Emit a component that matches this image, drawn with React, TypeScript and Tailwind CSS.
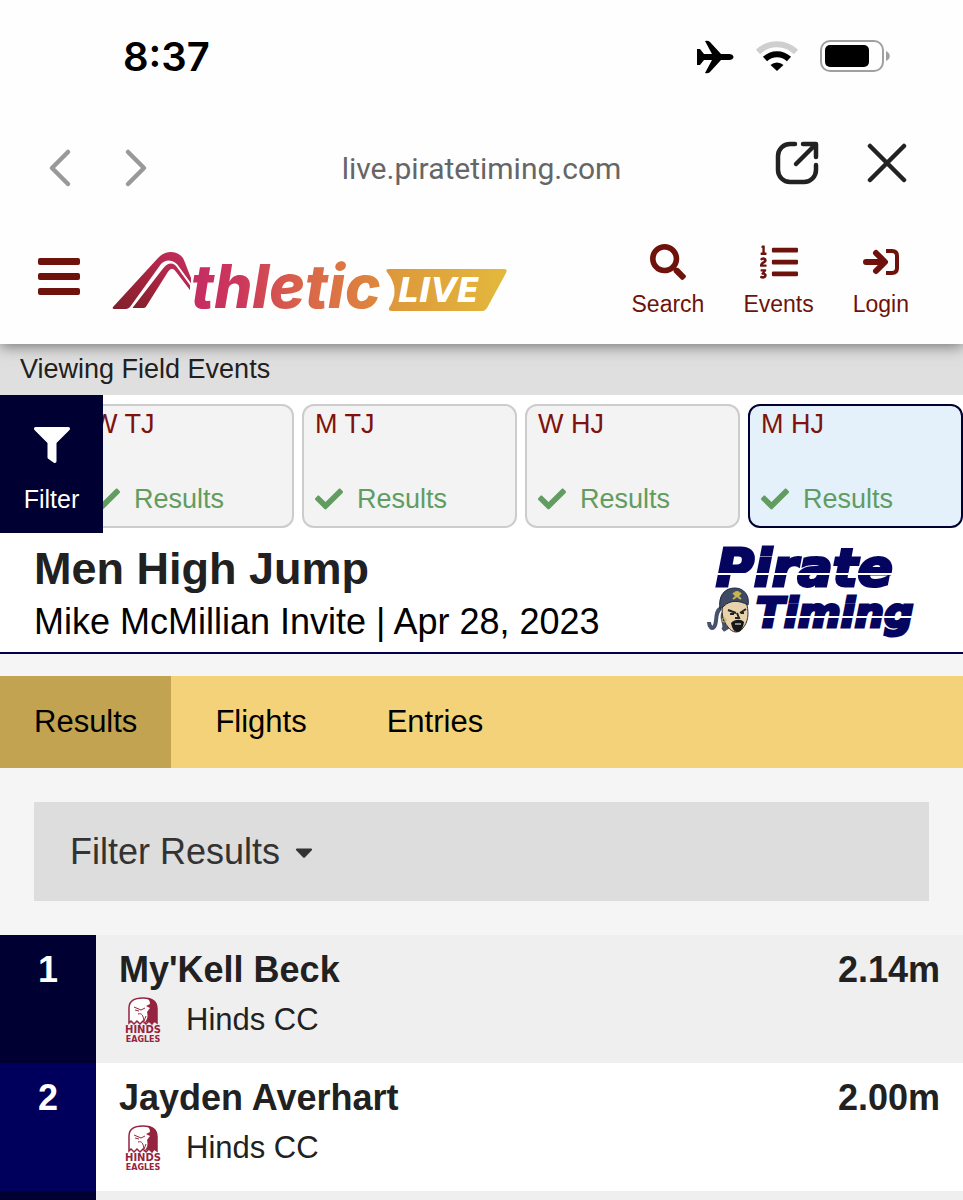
import { FaCaretDown, FaCheck, FaFilter, FaListOl, FaSearch } from "react-icons/fa";

const events = [
  { name: "W TJ", active: false },
  { name: "M TJ", active: false },
  { name: "W HJ", active: false },
  { name: "M HJ", active: true },
];

const results = [
  { place: 1, name: "My'Kell Beck", team: "Hinds CC", mark: "2.14m" },
  { place: 2, name: "Jayden Averhart", team: "Hinds CC", mark: "2.00m" },
];

function StatusBar() {
  return (
    <div className="flex h-[114px] items-center justify-between pl-[123px] pr-[73px] text-black">
      <span className="font-['Inter'] text-[40px] font-semibold leading-none">8:37</span>
      <div className="flex items-center gap-[21px]">
        <svg width="38" height="34" viewBox="0 0 38 34" aria-hidden="true">
          <path
            d="M1 9h3l4 5h8L9 1q3-1 5 1l11 12h8c3 0 4.500 1.500 4.500 3s-1.500 3-4.500 3h-8L14 32q-2 2-5 1l7-13H8l-4 5H1z"
            fill="currentColor"
          />
        </svg>
        <svg width="44" height="32" viewBox="0 0 44 32" aria-hidden="true">
          <path d="M3 11a27 27 0 0 1 38 0" fill="none" stroke="#cfcfcf" strokeWidth="6" />
          <path d="M10 18a17.500 17.500 0 0 1 24 0" fill="none" stroke="currentColor" strokeWidth="6" />
          <path d="M15.500 24a9.500 9.500 0 0 1 13 0L22 30z" fill="currentColor" />
        </svg>
        <svg width="70" height="34" viewBox="0 0 70 34" aria-hidden="true">
          <rect x="1" y="1" width="62" height="30" rx="9" fill="none" stroke="#a0a0a0" strokeWidth="2" />
          <rect x="5" y="5" width="44" height="22" rx="5" fill="currentColor" />
          <path d="M66 11c5 2 5 8 0 10z" fill="#a0a0a0" />
        </svg>
      </div>
    </div>
  );
}

function BrowserBar() {
  return (
    <div className="grid h-[108px] grid-cols-[1fr_auto_1fr] items-center px-12">
      <div className="flex gap-[52px] text-[#999]">
        <button aria-label="Back">
          <svg width="24" height="40" viewBox="0 0 24 40" fill="none" stroke="currentColor" strokeWidth="4.500" strokeLinecap="round" strokeLinejoin="round">
            <path d="M20 4 4 20l16 16" />
          </svg>
        </button>
        <button aria-label="Forward">
          <svg width="24" height="40" viewBox="0 0 24 40" fill="none" stroke="currentColor" strokeWidth="4.500" strokeLinecap="round" strokeLinejoin="round">
            <path d="m4 4 16 16L4 36" />
          </svg>
        </button>
      </div>
      <span className="font-['Roboto'] text-[30px] text-[#666]">live.piratetiming.com</span>
      <div className="flex justify-end gap-12 pb-2.5 pr-2 text-[#222]">
        <button aria-label="Open in browser">
          <svg width="44" height="44" viewBox="0 0 44 44" fill="none" stroke="currentColor" strokeWidth="4.500" strokeLinecap="round" strokeLinejoin="round">
            <path d="M20 3h-5A12 12 0 0 0 3 15v14a12 12 0 0 0 12 12h14a12 12 0 0 0 12-12v-5" />
            <path d="M28 3h13v13M40 4 21 23" />
          </svg>
        </button>
        <button aria-label="Close">
          <svg width="40" height="44" viewBox="0 0 40 44" fill="none" stroke="currentColor" strokeWidth="4.500" strokeLinecap="round">
            <path d="m3 5 34 34M37 5 3 39" />
          </svg>
        </button>
      </div>
    </div>
  );
}

function MenuIcon() {
  return (
    <svg width="42" height="42" viewBox="0 0 42 42" fill="currentColor" aria-hidden="true">
      <rect y="3" width="42" height="7" rx="2" />
      <rect y="18" width="42" height="7" rx="2" />
      <rect y="33" width="42" height="7" rx="2" />
    </svg>
  );
}

function AthleticLogo() {
  return (
    <svg width="396" height="64" viewBox="0 0 396 64" className="overflow-visible" role="img" aria-label="AthleticLIVE">
      <defs>
        <linearGradient id="peak" x1="0" y1="1" x2="1" y2="0">
          <stop offset="0" stopColor="#80202c" />
          <stop offset="0.5" stopColor="#a5243d" />
          <stop offset="1" stopColor="#c62f63" />
        </linearGradient>
        <linearGradient id="word" gradientUnits="userSpaceOnUse" x1="80" y1="0" x2="276" y2="0">
          <stop offset="0" stopColor="#c52c63" />
          <stop offset="0.25" stopColor="#cc385b" />
          <stop offset="0.55" stopColor="#d9634a" />
          <stop offset="1" stopColor="#de8c3b" />
        </linearGradient>
        <linearGradient id="badge" x1="0" y1="0" x2="1" y2="0">
          <stop offset="0" stopColor="#dd973a" />
          <stop offset="1" stopColor="#e3b93d" />
        </linearGradient>
      </defs>
      <path
        d="M1 57 46 8C53 0 65 0 71 8c3 6 5 13 8 20v6C73 26 68 18 64 14c-5-5-11-4-15 0L18 57q-2 2-4 2H2q-2 0-1-2z"
        fill="url(#peak)"
      />
      <path
        d="M20 57 51 17c5-6 11-6 15 0l13 18v8L63 22c-2-3-4-3-6 0L35 57q-1 2-3 2H21q-2 0-1-2z"
        fill="url(#peak)"
        stroke="#fefefe"
        strokeWidth="2"
      />
      <text x="79" y="58" fill="url(#word)" className="font-['Inter'] text-[60px] font-extrabold italic">
        thletic
      </text>
      <path d="M275 22q-2-3 2-3h115q4 0 2 4l-19 35q-2 3-4 3h-91q-4 0-3-3 12-18-2-36z" fill="url(#badge)" />
      <text x="286" y="52" fill="#fff" className="font-['DejaVu_Sans'] text-[33px] font-bold italic">
        LIVE
      </text>
    </svg>
  );
}

function LoginIcon() {
  return (
    <svg width="38" height="36" viewBox="0 0 38 36" fill="none" stroke="currentColor" strokeWidth="6" strokeLinecap="round" strokeLinejoin="round" aria-hidden="true">
      <path d="M4 18h18M14 9l9 9-9 9" />
      <path d="M24 7h6q5 0 5 5v12q0 5-5 5h-6" strokeWidth="4" strokeLinecap="butt" />
    </svg>
  );
}

function NavButton({ label, children }: { label: string; children: React.ReactNode }) {
  return (
    <button className="flex flex-col items-center gap-2.5 text-[23px] leading-7 text-[#6f120b]">
      <span className="flex h-9 items-center">{children}</span>
      {label}
    </button>
  );
}

function PirateLogo() {
  return (
    <svg width="222" height="88" viewBox="0 0 222 88" className="overflow-visible" role="img" aria-label="Pirate Timing">
      <g fill="#05055f" stroke="#05055f" strokeWidth="3" className="font-['DejaVu_Sans'] font-bold italic">
        <text x="9" y="34" className="text-[52px]">Pirate</text>
        <text x="49" y="75" className="text-[41px]">Timing</text>
      </g>
      <path d="M6 22h204M48 65h166" stroke="#fff" strokeWidth="2" />
      <path d="M14 56C7 60 11 70 7 75c-2 3-5-1-5-5M17 60c-5 8 4 12-1 18l5-3" fill="none" stroke="#46516b" strokeWidth="4" />
      <path d="M17 50c8-5 19-4 23 3 2 9 1 17-4 23-4 6-11 5-15-1-5-6-8-15-4-25z" fill="#e8d2ac" stroke="#332e2e" />
      <path d="M13 57c-2-14 5-21 15-21 9 0 15 8 13 17-9-5-18-5-24 1z" fill="#3f4b66" stroke="#20273a" />
      <path d="m26 41 8 6m0-6-8 6" stroke="#c9b649" strokeWidth="2" />
      <circle cx="30" cy="42" r="3" fill="#c9b649" />
      <path d="m21 58 8 3m4 0 6-4M23 62h4m7-1h3M30 61l2 5h-4" fill="none" stroke="#222" strokeWidth="2" />
      <path d="M24 71c4-4 10-4 13-1-1 7-4 10-7 10s-5-4-6-9z" fill="#171717" />
      <path d="M28 72h6" stroke="#fff" />
      <circle cx="17" cy="68" r="2" fill="none" stroke="#c9b649" />
    </svg>
  );
}

function EaglesLogo() {
  return (
    <svg width="38" height="46" viewBox="0 0 38 46" className="overflow-visible" role="img" aria-label="Hinds Eagles">
      <path d="M5 26V11C5 4 10 1 19 1s14 4 14 11v14l-3-2-2 3-3-3-3 3-3-3-3 3-3-3-3 3-3-3z" fill="#fff" stroke="#94243f" strokeWidth="1.500" />
      <path d="M22 1c8 0 11 4 11 11v14l-3-2-2 3-3-3-6 3c5-4 5-8 4-12l3-4-4-2 4-2c0-3-1-5-4-6z" fill="#94243f" />
      <path d="m10 10 7 3 4-2M11 13l4 1M14 17c4-1 5 1 6 7l2-5" fill="none" stroke="#94243f" />
      <g fill="#94243f" textAnchor="middle" className="font-['DejaVu_Sans'] font-bold">
        <text x="19" y="36" className="text-[10px]">HINDS</text>
        <text x="19" y="45" className="text-[8px]">EAGLES</text>
      </g>
    </svg>
  );
}

export default function App() {
  return (
    <div className="flex h-screen flex-col overflow-hidden bg-[#f5f5f5] font-['Liberation_Sans',sans-serif] text-[#212121]">
      <header className="relative z-20 shrink-0 bg-[#fefefe] shadow-[0_2px_14px_rgba(0,0,0,0.5)]">
        <StatusBar />
        <BrowserBar />
        <nav className="flex h-[122px] items-start justify-between pl-[38px] pr-[54px] pt-[22px]">
          <div className="flex items-start gap-8">
            <button aria-label="Menu" className="pt-[11px] text-[#6f120b]">
              <MenuIcon />
            </button>
            <a href="#" className="pt-1.5">
              <AthleticLogo />
            </a>
          </div>
          <div className="flex gap-[39px]">
            <NavButton label="Search">
              <FaSearch className="size-9" />
            </NavButton>
            <NavButton label="Events">
              <FaListOl className="size-[38px]" />
            </NavButton>
            <NavButton label="Login">
              <LoginIcon />
            </NavButton>
          </div>
        </nav>
      </header>

      <div className="flex h-[51px] shrink-0 items-center bg-[#dfdfdf] px-5 text-[27px]">Viewing Field Events</div>

      <section className="relative shrink-0 bg-white">
        <div className="flex justify-end gap-2 overflow-hidden pb-[5px] pt-[9px]">
          {events.map((event) => (
            <button
              key={event.name}
              className={`flex h-[124px] w-[215px] shrink-0 flex-col justify-between rounded-xl border-2 px-[11px] pb-[11px] pt-0.5 text-left text-[27px] leading-8 ${
                event.active ? "border-[#000033] bg-[#e4f1fb]" : "border-[#ccc] bg-[#f3f3f3]"
              }`}
            >
              <span className="text-[#80120b]">{event.name}</span>
              <span className="flex items-center gap-3.5 text-[#619c61]">
                <FaCheck className="size-7" />
                Results
              </span>
            </button>
          ))}
        </div>
        <button className="absolute inset-y-0 left-0 flex w-[103px] flex-col items-center justify-center gap-5 bg-[#000033] pt-3.5 text-[25px] leading-8 text-white">
          <FaFilter className="size-9" />
          Filter
        </button>
      </section>

      <section className="flex shrink-0 items-center justify-between border-b-2 border-[#00004c] bg-white pb-1 pl-[34px] pr-[34px] pt-2.5">
        <div>
          <h1 className="text-[45px] font-bold leading-[52px]">Men High Jump</h1>
          <p className="text-[36px] leading-[53px] text-black">Mike McMillian Invite | Apr 28, 2023</p>
        </div>
        <PirateLogo />
      </section>

      <div className="mt-[22px] flex h-[92px] shrink-0 bg-[#f4d27a] text-[31px] text-black">
        <button className="mr-1 bg-[#c2a352] px-[34px]">Results</button>
        <button className="px-10">Flights</button>
        <button className="px-10">Entries</button>
      </div>

      <button className="mx-[34px] my-[34px] flex h-[99px] shrink-0 items-center gap-2.5 bg-[#ddd] px-9 text-[36px] text-[#333]">
        Filter Results
        <FaCaretDown className="size-7" />
      </button>

      <table className="w-full shrink-0 border-collapse text-left">
        <tbody>
          {results.map((result) => (
            <tr key={result.place} className="h-32 align-top odd:bg-[#efefef] even:bg-white">
              <td className={`w-24 pt-3 text-center text-[36px] font-bold leading-[46px] text-white ${result.place % 2 ? "bg-[#000033]" : "bg-[#00005c]"}`}>
                {result.place}
              </td>
              <td className="pl-[23px] pt-3">
                <div className="text-[36px] font-bold leading-[46px]">{result.name}</div>
                <div className="flex items-center gap-6 pl-[5px] pt-1 text-[31px] leading-[46px]">
                  <EaglesLogo />
                  {result.team}
                </div>
              </td>
              <td className="pr-[23px] pt-3 text-right text-[36px] font-bold leading-[46px]">{result.mark}</td>
            </tr>
          ))}
          <tr className="h-32 bg-[#efefef]">
            <td className="bg-[#000033]" />
            <td colSpan={2} />
          </tr>
        </tbody>
      </table>
    </div>
  );
}
